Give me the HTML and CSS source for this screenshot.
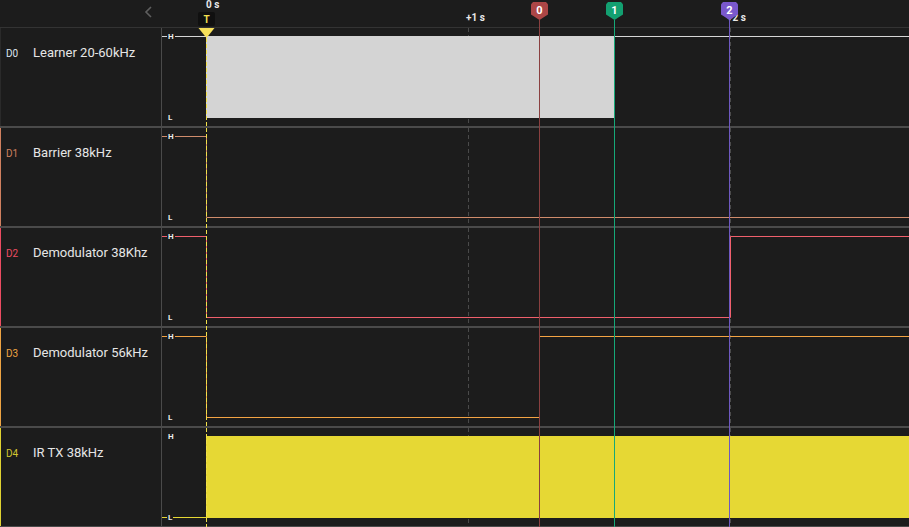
FILE: index.html
```html
<!DOCTYPE html>
<html>
<head>
<meta charset="utf-8">
<link rel="stylesheet" href="styles.css">
</head>
<body>
<div class="app">
  <div class="header">
    <div class="hdr-left">
      <svg class="chev" width="12" height="14" viewBox="0 0 12 14"><polyline points="8,2 3,7 8,12" fill="none" stroke="#5f5f5f" stroke-width="1.6"/></svg>
    </div>
    <div class="timeline">
      <span class="tick t0">0 s</span>
      <span class="tick t1">+1 s</span>
      <span class="tick t2">+2 s</span>
      <span class="trig">T</span>
      <span class="flag f0">0</span>
      <span class="flag f1">1</span>
      <span class="flag f2">2</span>
    </div>
  </div>

  <div class="rows">
    <div class="row c0">
      <div class="label"><span class="id">D0</span><span class="name">Learner 20-60kHz</span></div>
      <div class="plot">
        <svg width="747" height="98" viewBox="0 0 747 98">
          <line class="grid" x1="306.5" y1="0" x2="306.5" y2="98"/>
          <line class="grid" x1="568.5" y1="0" x2="568.5" y2="98"/>
          <line x1="0" y1="8.5" x2="44" y2="8.5" stroke="#d6d6d6"/>
          <rect x="44" y="8" width="408" height="82" fill="#d4d4d4"/>
          <line x1="452" y1="8.5" x2="747" y2="8.5" stroke="#d6d6d6"/>
        </svg>
        <span class="lvl h">H</span><span class="lvl l">L</span>
      </div>
    </div>
    <div class="row c1">
      <div class="label"><span class="id">D1</span><span class="name">Barrier 38kHz</span></div>
      <div class="plot">
        <svg width="747" height="98" viewBox="0 0 747 98">
          <line class="grid" x1="306.5" y1="0" x2="306.5" y2="98"/>
          <line class="grid" x1="568.5" y1="0" x2="568.5" y2="98"/>
          <polyline points="0,8.5 44.5,8.5 44.5,89.5 747,89.5" fill="none" stroke="#d08c6c"/>
        </svg>
        <span class="lvl h">H</span><span class="lvl l">L</span>
      </div>
    </div>
    <div class="row c2">
      <div class="label"><span class="id">D2</span><span class="name">Demodulator 38Khz</span></div>
      <div class="plot">
        <svg width="747" height="98" viewBox="0 0 747 98">
          <line class="grid" x1="306.5" y1="0" x2="306.5" y2="98"/>
          <line class="grid" x1="568.5" y1="0" x2="568.5" y2="98"/>
          <polyline points="0,8.5 44.5,8.5 44.5,89.5 568.5,89.5 568.5,8.5 747,8.5" fill="none" stroke="#f0606c"/>
        </svg>
        <span class="lvl h">H</span><span class="lvl l">L</span>
      </div>
    </div>
    <div class="row c3">
      <div class="label"><span class="id">D3</span><span class="name">Demodulator 56kHz</span></div>
      <div class="plot">
        <svg width="747" height="98" viewBox="0 0 747 98">
          <line class="grid" x1="306.5" y1="0" x2="306.5" y2="98"/>
          <line class="grid" x1="568.5" y1="0" x2="568.5" y2="98"/>
          <polyline points="0,8.5 44.5,8.5 44.5,89.5 377.5,89.5 377.5,8.5 747,8.5" fill="none" stroke="#f4a444"/>
        </svg>
        <span class="lvl h">H</span><span class="lvl l">L</span>
      </div>
    </div>
    <div class="row c4">
      <div class="label"><span class="id">D4</span><span class="name">IR TX 38kHz</span></div>
      <div class="plot">
        <svg width="747" height="98" viewBox="0 0 747 98">
          <line class="grid" x1="306.5" y1="0" x2="306.5" y2="98"/>
          <line class="grid" x1="568.5" y1="0" x2="568.5" y2="98"/>
          <line x1="0" y1="89.5" x2="44" y2="89.5" stroke="#e6d834"/>
          <rect x="44" y="8" width="703" height="82" fill="#e6d834"/>
        </svg>
        <span class="lvl h">H</span><span class="lvl l">L</span>
      </div>
    </div>
  </div>

  <svg class="overlay" width="909" height="527" viewBox="0 0 909 527">
    <line x1="206.5" y1="38" x2="206.5" y2="527" stroke="#f2e04a" stroke-dasharray="4 2"/>
    <polygon points="198.5,28 214.5,28 206.5,38" fill="#f7e15a"/>
    <line x1="539.5" y1="20" x2="539.5" y2="527" stroke="#8a4040"/>
    <line x1="614.5" y1="20" x2="614.5" y2="527" stroke="#16a878"/>
    <line x1="729.5" y1="20" x2="729.5" y2="527" stroke="#6e58c0"/>
  </svg>
</div>
</body>
</html>
```
FILE: styles.css
```css
html, body {
  margin: 0;
  padding: 0;
  background: #1c1c1c;
}
.app {
  position: relative;
  width: 909px;
  height: 527px;
  overflow: hidden;
  background: #1c1c1c;
  font-family: Roboto, "Liberation Sans", sans-serif;
  color: #e4e4e4;
}
.header {
  display: flex;
  height: 27px;
  border-bottom: 1px solid #333;
}
.hdr-left {
  width: 162px;
  flex: none;
  display: flex;
  justify-content: flex-end;
  align-items: flex-start;
}
.chev {
  margin: 5px 7px 0 0;
}
.timeline {
  flex: 1;
  position: relative;
}
.tick {
  position: absolute;
  font-size: 10px;
  font-weight: 700;
  color: #e8e8e8;
  line-height: 10px;
  white-space: nowrap;
}
.t0 { left: 44px; top: 0px; }
.t1 { left: 304px; top: 13px; }
.t2 { left: 565px; top: 13px; }
.trig {
  position: absolute;
  left: 36px;
  top: 12px;
  width: 17px;
  height: 14px;
  background: #101010;
  border-radius: 2px;
  color: #f4e050;
  font-size: 10px;
  font-weight: 700;
  text-align: center;
  line-height: 15px;
}
.flag {
  position: absolute;
  top: 2px;
  width: 17px;
  height: 18px;
  color: #fff;
  font-size: 11px;
  font-weight: 700;
  text-align: center;
  line-height: 18px;
  padding-bottom: 0;
  clip-path: polygon(0 12%, 12% 0, 88% 0, 100% 12%, 100% 70%, 50% 100%, 0 70%);
  z-index: 2;
}
.flag { line-height: 17px; }
.f0 { left: 369px; background: #ac4646; }
.f1 { left: 444px; background: #13a071; }
.f2 { left: 559px; background: #7a58cc; }

.rows {
  display: flex;
  flex-direction: column;
}
.row {
  display: flex;
  height: 98px;
  border-bottom: 2px solid #4a4a4a;
}
.label {
  box-sizing: border-box;
  width: 162px;
  flex: none;
  display: flex;
  align-items: baseline;
  padding: 17px 0 0 5px;
  border-left: 1px solid var(--c);
  border-right: 1px solid #4a4a4a;
}
.id {
  width: 27px;
  flex: none;
  font-size: 10px;
  color: var(--c);
}
.name {
  font-size: 13px;
  color: #e6e6e6;
  white-space: nowrap;
}
.c0 { --c: #d8d8d8; }
.c0 .label { border-left-color: #2a2a2a; }
.c0 .id { color: #dde4ee; }
.c1 { --c: #d0805f; }
.c2 { --c: #ec4c62; }
.c3 { --c: #eea443; }
.c4 { --c: #e0d232; }
.c4 .id { color: #d2c630; }
.plot {
  flex: 1;
  position: relative;
}
.plot svg {
  display: block;
}
.grid {
  stroke: #4a4a4a;
  stroke-dasharray: 4 3;
}
.lvl {
  position: absolute;
  left: 5px;
  font-size: 8px;
  font-weight: 700;
  line-height: 8px;
  color: #ececec;
  background: #1c1c1c;
  padding: 0 1px;
}
.lvl.h { top: 5px; }
.lvl.l { top: 86px; }
.overlay {
  position: absolute;
  left: 0;
  top: 0;
  pointer-events: none;
}
```
